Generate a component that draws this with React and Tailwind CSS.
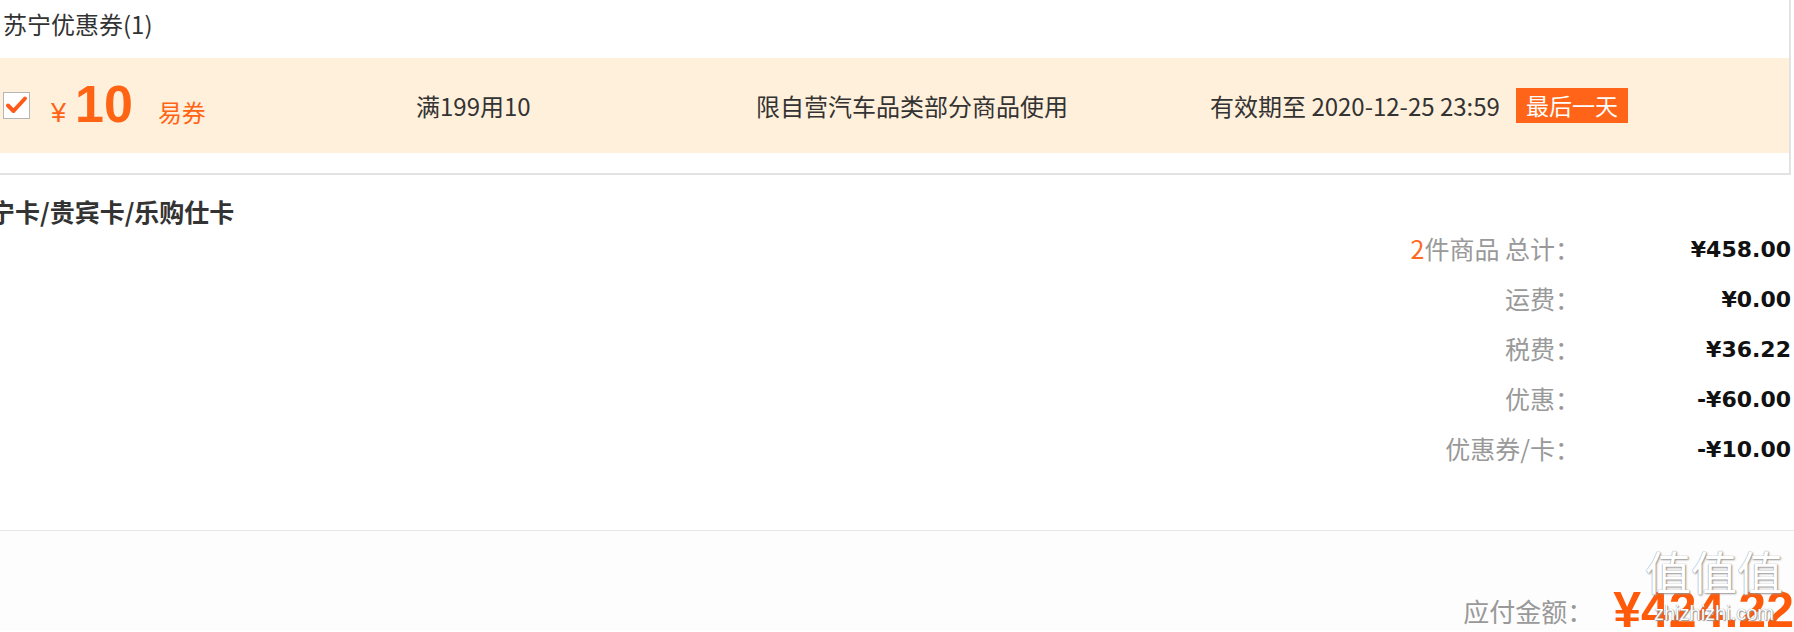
import React from 'react';

const summary = [
  { label: '运费：', value: '¥0.00' },
  { label: '税费：', value: '¥36.22' },
  { label: '优惠：', value: '-¥60.00' },
  { label: '优惠券/卡：', value: '-¥10.00' },
];

const CheckBox = () => (
  <svg width="27" height="27" viewBox="0 0 27 27" className="shrink-0">
    <rect x="0.5" y="0.5" width="26" height="26" fill="#fff" stroke="#b5b5b5" />
    <path d="M5 13.5 L10.5 19 L22 6.5" fill="none" stroke="#ff5a1a" strokeWidth="4" strokeLinecap="round" strokeLinejoin="round" />
  </svg>
);

const SummaryRow = ({ label, value, count }) => (
  <div className="flex h-[50px] items-center justify-end pr-[3px]">
    <div className="text-right text-[25px] text-[#999]">
      {count && <span className="text-[#ff6a1f]">{count}</span>}
      {label}
    </div>
    <div className="w-[211px] text-right font-['DejaVu_Sans',sans-serif] text-[22px] font-bold text-[#111]">
      {value}
    </div>
  </div>
);

export default function App() {
  return (
    <div className="relative h-[632px] w-[1794px] overflow-hidden bg-white font-['Noto_Sans_CJK_SC',sans-serif] text-[#333]">
      {/* coupon box */}
      <div className="w-[1791px] border-r-2 border-b-2 border-[#e2e2e2]">
        <div className="h-[58px] pt-[9px] pl-[3px] text-[24px] leading-[30px] text-[#333]">苏宁优惠券(1)</div>
        <div className="flex h-[95px] items-center bg-[#fff0dc]">
          <div className="flex w-[416px] items-center pl-[3px]">
            <CheckBox />
            <div className="ml-[21px] flex items-baseline text-[#ff6414]">
              <span className="font-['Liberation_Sans',sans-serif] text-[27px]">¥</span>
              <span className="ml-[9px] font-['Liberation_Sans',sans-serif] text-[52px] leading-none font-bold">10</span>
              <span className="ml-[25px] text-[24px]">易券</span>
            </div>
          </div>
          <div className="w-[340px] text-[24px]">满199用10</div>
          <div className="w-[454px] text-[24px]">限自营汽车品类部分商品使用</div>
          <div className="flex items-center">
            <span className="text-[24px]">有效期至 2020-12-25 23:59</span>
            <span className="ml-[16px] flex h-[35px] w-[112px] items-center justify-center bg-[#ff6418] text-[23px] text-white">最后一天</span>
          </div>
        </div>
        <div className="h-[20px]" />
      </div>

      {/* cards */}
      <div className="mt-[21px] ml-[-35px] text-[25px] leading-[30px] font-bold text-[#333]">苏宁卡/贵宾卡/乐购仕卡</div>

      {/* summary */}
      <div className="mt-[-2px]">
        <SummaryRow count="2" label="件商品 总计：" value="¥458.00" />
        {summary.map((row) => (
          <SummaryRow key={row.label} label={row.label} value={row.value} />
        ))}
      </div>

      <div className="mt-[56px] border-t border-[#e6e6e6]" />

      {/* total */}
      <div className="flex h-[100px] items-center justify-end bg-[#fdfdfd] pt-[58px]">
        <span className="text-[26px] text-[#999]">应付金额：</span>
        <span className="ml-[20px] font-['Liberation_Sans',sans-serif] text-[50px] leading-none font-bold whitespace-nowrap text-[#ff5a0a]">¥424.22</span>
      </div>

      {/* watermark */}
      <div className="absolute top-[544px] left-[1640px] flex w-[148px] flex-col items-center text-white">
        <span className="text-[46px] leading-[52px] whitespace-nowrap [text-shadow:0_0_1px_#777,1px_1px_2px_#999]">值值值</span>
        <span className="mt-[6px] font-['Liberation_Sans',sans-serif] text-[20px] leading-[22px] whitespace-nowrap [text-shadow:0_0_1px_#666,1px_1px_1px_#999]">zhizhizhi.com</span>
      </div>
    </div>
  );
}
